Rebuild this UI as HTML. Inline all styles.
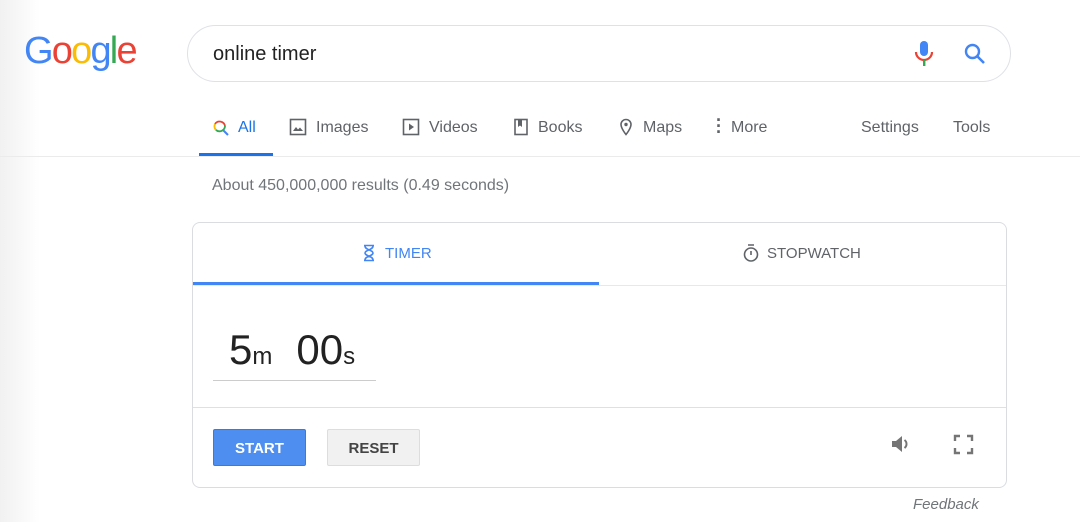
<!DOCTYPE html><html><head><style>
body{margin:0;width:1080px;height:522px;background:#fff;font-family:"Liberation Sans",Arial,sans-serif;position:relative;overflow:hidden}
.a{position:absolute}
.grad{left:0;top:0;width:40px;height:522px;background:linear-gradient(90deg,#f1f1f1,#fff)}
.logo{left:24px;top:30px;font-size:38px;letter-spacing:-1.8px}
.sb{left:187px;top:25px;width:824px;height:57px;border:1px solid #dfe1e5;border-radius:29px;box-sizing:border-box}
.tab{top:119px;font-size:16px;color:#5f6368}
.card{left:192px;top:222px;width:815px;height:266px;border:1px solid #dadce0;border-radius:8px;box-sizing:border-box}
.btn{top:429px;height:37px;width:93px;border-radius:2px;font-size:15px;font-weight:bold;text-align:center;line-height:37px;box-sizing:border-box}
</style></head><body>
<div class="a grad"></div>
<div class="a logo"><span style="color:#4285f4">G</span><span style="color:#ea4335">o</span><span style="color:#fbbc05">o</span><span style="color:#4285f4">g</span><span style="color:#34a853">l</span><span style="color:#ea4335">e</span></div>
<div class="a sb"></div>
<div class="a" style="left:213px;top:43px;font-size:20px;color:#222">online timer</div>
<svg class="a" style="left:914px;top:40px" width="20" height="28" viewBox="0 0 20 28"><rect x="6" y="1" width="8" height="15" rx="4" fill="#4285f4"/><path d="M2 12a8 8 0 0 0 16 0" stroke="#ea4335" stroke-width="2.2" fill="none"/><rect x="9" y="20" width="2.4" height="6" fill="#34a853"/></svg>
<svg class="a" style="left:963px;top:42px" width="24" height="24" viewBox="0 0 24 24"><circle cx="9.5" cy="9.5" r="6.5" stroke="#4285f4" stroke-width="2.4" fill="none"/><path d="M14 14l7 7" stroke="#4285f4" stroke-width="2.6"/></svg>
<svg class="a" style="left:212px;top:119px" width="18" height="18" viewBox="0 0 18 18"><path d="M13 7A5.5 5.5 0 0 0 3 5" stroke="#ea4335" stroke-width="1.8" fill="none"/><path d="M3 5a5.5 5.5 0 0 0 1 6" stroke="#fbbc05" stroke-width="1.8" fill="none"/><path d="M4 11a5.5 5.5 0 0 0 9-4" stroke="#34a853" stroke-width="1.8" fill="none"/><path d="M11.5 11.5L16 16" stroke="#4285f4" stroke-width="2"/></svg>
<div class="a tab" style="left:238px;color:#1a73e8">All</div>
<div class="a" style="left:199px;top:153px;width:74px;height:3px;background:#1a73e8"></div>
<div class="a" style="left:0;top:156px;width:1080px;height:1px;background:#ebebeb"></div>
<svg class="a" style="left:289px;top:118px" width="18" height="18" viewBox="0 0 18 18"><rect x="1.5" y="1.5" width="15" height="15" stroke="#5f6368" stroke-width="1.6" fill="none"/><path d="M4 13l3-4 2 2.5 2-2 3 3.5z" fill="#5f6368"/></svg>
<div class="a tab" style="left:316px">Images</div>
<svg class="a" style="left:402px;top:118px" width="18" height="18" viewBox="0 0 18 18"><rect x="1.5" y="1.5" width="15" height="15" stroke="#5f6368" stroke-width="1.6" fill="none"/><path d="M7 5.5v7l5-3.5z" fill="#5f6368"/></svg>
<div class="a tab" style="left:429px">Videos</div>
<svg class="a" style="left:513px;top:118px" width="16" height="18" viewBox="0 0 16 18"><rect x="2" y="1.5" width="12" height="15" stroke="#5f6368" stroke-width="1.6" fill="none"/><path d="M5 2v7l2-1.5L9 9V2z" fill="#5f6368"/></svg>
<div class="a tab" style="left:538px">Books</div>
<svg class="a" style="left:618px;top:118px" width="16" height="18" viewBox="0 0 16 18"><path d="M8 1.5a5 5 0 0 0-5 5c0 4 5 10 5 10s5-6 5-10a5 5 0 0 0-5-5z" stroke="#5f6368" stroke-width="1.6" fill="none"/><circle cx="8" cy="6.5" r="1.7" fill="#5f6368"/></svg>
<div class="a tab" style="left:643px">Maps</div>
<div class="a tab" style="left:716px;top:117px;font-size:18px;line-height:6px;font-weight:bold;width:6px">·<br>·<br>·</div>
<div class="a tab" style="left:731px">More</div>
<div class="a tab" style="left:861px">Settings</div>
<div class="a tab" style="left:953px">Tools</div>
<div class="a" style="left:212px;top:177px;font-size:16px;color:#70757a">About 450,000,000 results (0.49 seconds)</div>
<div class="a card"></div>
<svg class="a" style="left:362px;top:244px" width="14" height="18" viewBox="0 0 14 18"><path d="M2 1.5h10M2 16.5h10M3 2c0 4 8 4 8 7s-8 3-8 7M11 2c0 4-8 4-8 7s8 3 8 7" stroke="#4285f4" stroke-width="1.6" fill="none"/></svg>
<div class="a" style="left:385px;top:245px;font-size:15px;color:#4285f4">TIMER</div>
<svg class="a" style="left:742px;top:243px" width="18" height="20" viewBox="0 0 18 20"><circle cx="9" cy="11.5" r="6.5" stroke="#5f6368" stroke-width="1.6" fill="none"/><path d="M6 2h6M9 8v4" stroke="#5f6368" stroke-width="1.6"/></svg>
<div class="a" style="left:767px;top:245px;font-size:15px;color:#5f6368">STOPWATCH</div>
<div class="a" style="left:193px;top:282px;width:406px;height:3px;background:#4285f4"></div>
<div class="a" style="left:193px;top:285px;width:813px;height:1px;background:#e8e8e8"></div>
<div class="a" style="left:229px;top:326px;color:#222"><span style="font-size:42px">5</span><span style="font-size:24px">m</span><span style="font-size:42px;margin-left:24px">00</span><span style="font-size:24px">s</span></div>
<div class="a" style="left:213px;top:380px;width:163px;height:1px;background:#ccc"></div>
<div class="a" style="left:193px;top:407px;width:813px;height:1px;background:#e0e0e0"></div>
<div class="a btn" style="left:213px;background:#4d8ef0;color:#fff;border:1px solid #3b78e7">START</div>
<div class="a btn" style="left:327px;background:#f1f1f1;color:#444;border:1px solid #ddd">RESET</div>
<svg class="a" style="left:890px;top:433px" width="22" height="22" viewBox="0 0 22 22"><path d="M2 8h4l6-5v16l-6-5H2z" fill="#757575"/><path d="M14.5 7a5 5 0 0 1 0 8" stroke="#757575" stroke-width="2" fill="none"/></svg>
<svg class="a" style="left:953px;top:434px" width="21" height="21" viewBox="0 0 21 21"><path d="M2 7V2h5M14 2h5v5M19 14v5h-5M7 19H2v-5" stroke="#757575" stroke-width="2.4" fill="none"/></svg>
<div class="a" style="left:913px;top:496px;font-size:15px;font-style:italic;color:#70757a">Feedback</div>
</body></html>
